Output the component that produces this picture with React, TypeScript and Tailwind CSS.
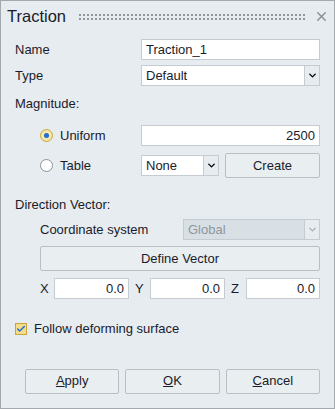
import { Check, ChevronDown, X } from "lucide-react";

const font = { fontFamily: '"Liberation Sans", Arial, sans-serif' };

const TextBox = ({ value, className = "", align = "left" }: { value: string; className?: string; align?: "left" | "right" }) => (
  <div
    className={`h-[21px] bg-white border border-[#c5cbd0] flex items-center px-[4px] ${align === "right" ? "justify-end" : ""} ${className}`}
  >
    <span className="leading-none">{value}</span>
  </div>
);

const Select = ({ value, className = "", disabled = false }: { value: string; className?: string; disabled?: boolean }) => (
  <div className={`h-[21px] flex ${className}`}>
    <div
      className={`flex-1 flex items-center px-[4px] border border-[#c5cbd0] ${disabled ? "bg-[#d8e0e6] text-[#8f969c]" : "bg-white"}`}
    >
      {value}
    </div>
    <div className="w-[15px] border border-l-0 border-[#c5cbd0] flex items-center justify-center">
      <ChevronDown className={`w-[11px] h-[11px] ${disabled ? "text-[#a8b0b6]" : "text-black"}`} strokeWidth={3} />
    </div>
  </div>
);

const Button = ({ children, className = "" }: { children: React.ReactNode; className?: string }) => (
  <div className={`h-[25px] border border-[#b9bfc4] rounded-[2px] bg-[#e9eef1] flex items-center justify-center ${className}`}>
    {children}
  </div>
);

const Radio = ({ checked }: { checked?: boolean }) => (
  <div
    className={`w-[13px] h-[13px] rounded-full border flex items-center justify-center ${
      checked ? "border-[#c9a53a] bg-[#f6e7a8]" : "border-[#8d9399] bg-white"
    }`}
  >
    {checked && <div className="w-[5px] h-[5px] rounded-full bg-[#1f6fd1]" />}
  </div>
);

export default function App() {
  return (
    <div
      style={font}
      className="w-[335px] h-[409px] bg-[#e6ecf0] border border-[#a3a9ae] text-[13px] text-[#1b1b2b] flex flex-col"
    >
      {/* title */}
      <div className="h-[31px] flex items-center pl-[6px] pr-[5px]">
        <span className="text-[16.5px] text-[#1a1a2a]">Traction</span>
        <div className="flex-1 ml-[12px] mr-[9px] h-[8px] bg-[radial-gradient(circle,#8e959b_1px,transparent_1.3px)] bg-[length:4px_4px]" />
        <X className="w-[15px] h-[15px] text-[#8d959b]" strokeWidth={2.5} />
      </div>

      <div className="px-[14px] flex flex-col">
        <div className="flex items-center mt-[7px]">
          <span className="w-[126px]">Name</span>
          <TextBox value="Traction_1" className="flex-1" />
        </div>
        <div className="flex items-center mt-[5px]">
          <span className="w-[126px]">Type</span>
          <Select value="Default" className="flex-1" />
        </div>

        <div className="mt-[10px] h-[16px] flex items-center">Magnitude:</div>

        <div className="flex items-center mt-[13px] pl-[25px]">
          <Radio checked />
          <span className="ml-[7px] w-[81px]">Uniform</span>
          <TextBox value="2500" align="right" className="flex-1" />
        </div>
        <div className="flex items-center mt-[7px] pl-[25px]">
          <Radio />
          <span className="ml-[7px] w-[81px]">Table</span>
          <Select value="None" className="w-[78px]" />
          <Button className="flex-1 ml-[6px]">Create</Button>
        </div>

        <div className="mt-[19px] h-[16px] flex items-center">Direction Vector:</div>

        <div className="pl-[25px] flex flex-col">
          <div className="flex items-center mt-[6px]">
            <span className="w-[143px]">Coordinate system</span>
            <Select value="Global" disabled className="flex-1" />
          </div>
          <Button className="mt-[6px]">Define Vector</Button>
          <div className="flex items-center mt-[7px]">
            <span className="w-[14px]">X</span>
            <TextBox value="0.0" align="right" className="w-[75px]" />
            <span className="w-[21px] pl-[6px]">Y</span>
            <TextBox value="0.0" align="right" className="w-[75px]" />
            <span className="w-[21px] pl-[6px]">Z</span>
            <TextBox value="0.0" align="right" className="flex-1" />
          </div>
        </div>

        <div className="flex items-center mt-[20px]">
          <div className="w-[12px] h-[12px] border border-[#c9a53a] bg-[#f4dc8a] flex items-center justify-center">
            <Check className="w-[10px] h-[10px] text-[#1f6fd1]" strokeWidth={3.5} />
          </div>
          <span className="ml-[7px]">Follow deforming surface</span>
        </div>

        <div className="flex mt-[30px] pl-[10px] gap-[6px]">
          <Button className="flex-1">
            <span><span className="underline">A</span>pply</span>
          </Button>
          <Button className="flex-1">
            <span><span className="underline">O</span>K</span>
          </Button>
          <Button className="flex-1">
            <span><span className="underline">C</span>ancel</span>
          </Button>
        </div>
      </div>
    </div>
  );
}
